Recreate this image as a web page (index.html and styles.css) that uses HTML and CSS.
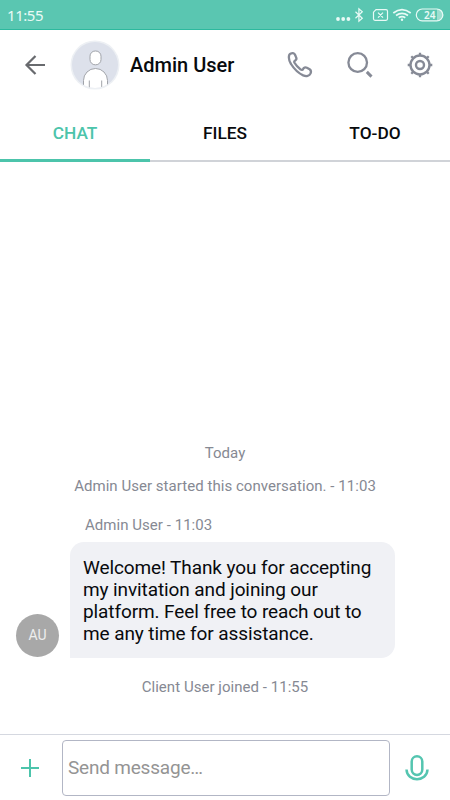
FILE: index.html
```html
<!DOCTYPE html>
<html lang="en">
<head>
<meta charset="utf-8">
<title>Chat</title>
<link rel="stylesheet" href="styles.css">
</head>
<body>
<div class="app">
  <div class="status">
    <span class="clock">11:55</span>
    <svg class="status-icons" width="112" height="30" viewBox="0 0 112 30" fill="none" stroke="#e9faf6" stroke-width="1.2">
      <g fill="#e9faf6" stroke="none"><circle cx="6" cy="19" r="1.900"/><circle cx="11.200" cy="19" r="1.900"/><circle cx="16.400" cy="19" r="1.900"/></g>
      <path d="M23.500 11.800l6.800 6.400-3.400 3V8.800l3.400 3-6.800 6.400"/>
      <path d="M44 9.700h10q1.500 0 1.500 1.500v7.600q0 1.500-1.500 1.500H43q-1.500 0-1.500-1.500V12.200zM46 12.700l5 5m0-5l-5 5"/>
      <g stroke-width="1.700"><path d="M61.300 13q8.700-6.800 17.400 0M64 15.500q6-4.400 12 0M66.700 17.800q3.300-2.200 6.600 0"/></g>
      <circle cx="70" cy="19.700" r="1.200" fill="#e9faf6" stroke="none"/>
      <path d="M105 9h.5a5.900 5.900 0 0 1 0 11.800H105z" fill="#9ddfd0" stroke="none"/>
      <rect x="84.300" y="9" width="26.500" height="11.800" rx="5.900"/>
    </svg>
    <span class="battery">24</span>
  </div>
  <header class="header">
    <svg class="back" width="22" height="22" viewBox="0 0 22 22" fill="none" stroke="#686a6e" stroke-width="2.200"><path d="M21 11H2.500M11.500 2L2.500 11l9 9"/></svg>
    <svg class="avatar" width="50" height="50" viewBox="0 0 50 50">
      <clipPath id="disc"><circle cx="25" cy="25" r="23"/></clipPath>
      <circle cx="25" cy="25" r="24.500" fill="#edf0f4"/>
      <circle cx="25" cy="25" r="23" fill="#dde1eb"/>
      <g clip-path="url(#disc)" fill="#fff" stroke="#a0a3a9" stroke-width="1">
        <rect x="20" y="11" width="11" height="13.800" rx="5.200"/>
        <path d="M13.500 50v-9.500a12 12 0 0 1 24 0V50z"/>
        <path d="M19.300 40.500V50M31.700 40.500V50"/>
      </g>
    </svg>
    <h1 class="name">Admin User</h1>
    <svg class="actions" width="180" height="60" viewBox="0 0 180 60" fill="none" stroke="#868a96" stroke-width="2.300">
      <path d="M20.300 18.700C18.300 19.700 18.300 25 21 29c3 4.800 7 8.900 12.200 11.400 3 1.200 6.300.5 7.400-2 .8-2 .3-3.300-1-4.200l-2.700-1.500c-1.700-.8-3.300 0-3.700 1.200-.3 1.200-1.600 1.400-2.700.5-2.500-2-4.500-4-6-6.600-.7-1.300 0-2 1-2.600 1.300-.8 1.100-2 .5-3.200l-1.100-2.500c-.8-1.800-2.700-1.800-4.600-.8z"/>
      <circle cx="87.700" cy="27.500" r="9.300"/><path d="M96.800 36.900l4.700 4.700" stroke-width="3"/>
      <circle cx="150" cy="30" r="9.500" stroke-width="2.400"/><circle cx="150" cy="30" r="4" stroke-width="2.400"/>
      <path d="M150 17.700V21M150 39v3.300M137.700 30h3.300M159 30h3.300M141.300 21.300l2 2M158.700 21.300l-2 2M141.300 38.700l2-2M158.700 38.700l-2-2"/>
    </svg>
  </header>
  <nav class="tabs">
    <span class="tab active">CHAT</span><span class="tab">FILES</span><span class="tab">TO-DO</span>
  </nav>
  <main class="chat">
    <p class="meta today">Today</p>
    <p class="meta started">Admin User started this conversation. - 11:03</p>
    <p class="meta sender">Admin User - 11:03</p>
    <div class="message">
      <span class="initials">AU</span>
      <p class="bubble">Welcome! Thank you for accepting<br>my invitation and joining our<br>platform. Feel free to reach out to<br>me any time for assistance.</p>
    </div>
    <p class="meta joined">Client User joined - 11:55</p>
  </main>
  <footer class="composer">
    <svg class="plus" width="18" height="18" viewBox="0 0 18 18" stroke="#4cc4ab" stroke-width="2"><path d="M9 0v18M0 9h18"/></svg>
    <div class="input">Send message…</div>
    <svg class="mic" width="24" height="26" viewBox="0 0 24 26" fill="none" stroke="#54c5b0" stroke-width="2.500"><rect x="6.700" y="1.300" width="10.600" height="18.600" rx="5.300"/><path d="M1.500 14.500c.5 13 20.500 13 21 0"/></svg>
  </footer>
</div>
</body>
</html>
```
FILE: styles.css
```css
* { box-sizing: border-box; }
body { margin: 0; background: #fff; font-family: Roboto, sans-serif; color: #080a0d; }
svg { display: block; flex: none; }
p, h1 { margin: 0; font-weight: 400; white-space: nowrap; }
.app { width: 450px; height: 800px; display: flex; flex-direction: column; overflow: hidden; }
.status { position: relative; height: 30px; flex: none; display: flex; justify-content: space-between; background: #5ac6b1; border-bottom: 1px solid #2db99e; color: #e9faf6; padding-left: 7px; }
.clock { font: 15px/31px "Noto Sans", sans-serif; letter-spacing: -.45px; }
.status-icons { margin-right: 6px; }
.battery { position: absolute; left: 424px; top: 9px; font: 600 10px/12px "Noto Sans", sans-serif; }
.header { height: 70px; flex: none; display: flex; align-items: center; }
.back { margin-left: 24px; }
.avatar { margin-left: 24px; }
.name { margin-left: 10px; font-size: 20px; font-weight: 500; line-height: 24px; width: 140px; }
.actions { flex: none; }
.tabs { height: 62px; flex: none; display: grid; grid-template-columns: repeat(3, 1fr); }
.tab { text-align: center; font-size: 17.300px; font-weight: 500; line-height: 66px; height: 62px; border-bottom: 2px solid #d0d3d8; }
.active { color: #4cc4ab; border-bottom: 3px solid #4cc4ab; }
.chat { flex: 1; display: flex; flex-direction: column; justify-content: flex-end; padding-bottom: 38px; }
.meta { color: #868993; font-size: 15px; line-height: 18px; text-align: center; letter-spacing: .04px; }
.started { margin-top: 15px; }
.sender { margin: 21px 0 0 85px; text-align: left; }
.message { display: flex; align-items: flex-end; margin: 8px 0 0 16px; }
.initials { width: 43px; height: 43px; margin-bottom: 1px; border-radius: 50%; background: #a8a8a8; color: #eee; font-size: 14px; line-height: 43px; text-align: center; }
.bubble { width: 325px; height: 116px; margin-left: 11px; padding: 15px 13px; background: #f0f1f5; border-radius: 14px 14px 14px 0; font-size: 19px; line-height: 22px; letter-spacing: -.1px; }
.joined { margin-top: 20px; }
.composer { height: 66px; flex: none; display: flex; align-items: center; border-top: 1px solid #d5d8e0; }
.plus { margin-left: 21px; }
.input { width: 328px; height: 56px; margin-left: 23px; border: 1px solid #b2b6c5; border-radius: 4px; padding-left: 5px; font-size: 19px; line-height: 54px; color: #949494; letter-spacing: -.2px; }
.mic { margin-left: 15px; }
```
